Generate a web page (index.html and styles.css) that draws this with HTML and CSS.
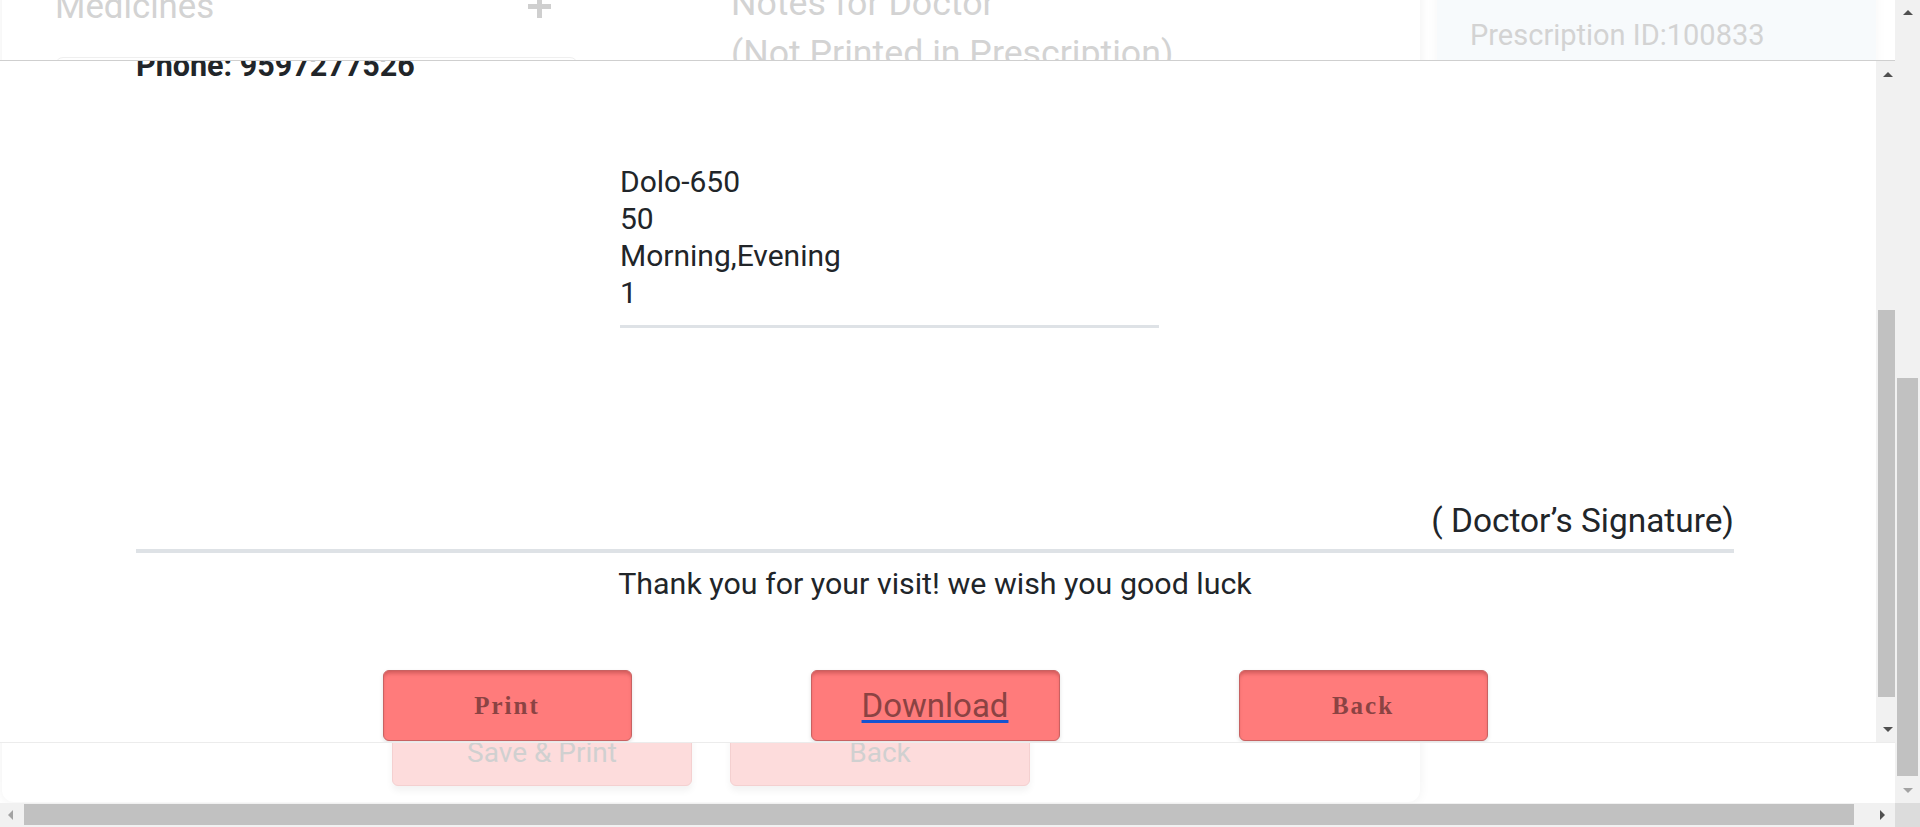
FILE: index.html
```html
<!DOCTYPE html>
<html lang="en">
<head>
<meta charset="utf-8">
<title>Prescription</title>
<link rel="stylesheet" href="styles.css">
</head>
<body>
<div class="viewport">
  <div class="page">
    <div class="page-scroll">
      <section class="card">
        <div class="form-row">
          <div class="col-med">
            <div class="label-row">
              <span class="label">Medicines</span>
              <svg class="plus" width="25" height="25" viewBox="0 0 25 25"><path d="M12.5 1v23M1 12.5h23" stroke="#cfcfcf" stroke-width="5" fill="none"/></svg>
            </div>
            <div class="input-box"></div>
          </div>
          <div class="col-notes">
            <p class="notes">Notes for Doctor<br>(Not Printed in Prescription)</p>
          </div>
        </div>
        <div class="card-actions">
          <button class="ghost-btn">Save &amp; Print</button>
          <button class="ghost-btn">Back</button>
        </div>
      </section>
      <aside class="side">
        <p class="rx-id">Prescription ID:100833</p>
      </aside>
    </div>
  </div>
  <div class="vscroll">
    <div class="sb-arrow"><span class="tri-up"></span></div>
    <div class="vs-gap-top"></div>
    <div class="vs-thumb"></div>
    <div class="vs-gap-bottom"></div>
    <div class="sb-arrow"><span class="tri-down dim"></span></div>
  </div>
  <div class="hscroll">
    <div class="hs-left"><span class="tri-left dim"></span></div>
    <div class="hs-thumb"></div>
    <div class="hs-gap"></div>
    <div class="hs-right"><span class="tri-right"></span></div>
  </div>
  <div class="corner"></div>
</div>

<div class="modal">
  <div class="modal-body">
    <div class="rx">
      <p class="phone">Phone: 9597277526</p>
      <div class="med">
        <p>Dolo-650</p>
        <p>50</p>
        <p>Morning,Evening</p>
        <p>1</p>
      </div>
      <p class="sign">( Doctor’s Signature)</p>
      <hr class="rule">
      <p class="thanks">Thank you for your visit! we wish you good luck</p>
      <div class="actions">
        <button class="btn btn-serif">Print</button>
        <button class="btn"><span class="dl">Download</span></button>
        <button class="btn btn-serif">Back</button>
      </div>
    </div>
  </div>
  <div class="modal-scroll">
    <div class="ms-arrow"><span class="tri-up"></span></div>
    <div class="ms-gap-top"></div>
    <div class="ms-thumb"></div>
    <div class="ms-gap-bottom"></div>
    <div class="ms-arrow"><span class="tri-down"></span></div>
  </div>
</div>
</body>
</html>
```

FILE: styles.css
```css
* { box-sizing: border-box; }

html, body {
  margin: 0;
  padding: 0;
  width: 1920px;
  height: 827px;
  overflow: hidden;
  background: #fff;
  font-family: Roboto, "Liberation Sans", sans-serif;
}

p { margin: 0; }

/* ---------- viewport with page scrollbars ---------- */
.viewport {
  display: grid;
  grid-template-columns: 1895px 25px;
  grid-template-rows: 803px 24px;
  width: 1920px;
  height: 827px;
}

.page {
  overflow: hidden;
  background: #fff;
}

.page-scroll {
  display: flex;
  align-items: flex-start;
  margin-top: -40px;
}

.card {
  width: 1418px;
  height: 842px;
  margin-left: 2px;
  display: flex;
  flex-direction: column;
  justify-content: space-between;
  background: #fff;
  border-radius: 0 0 12px 12px;
  box-shadow: 0 0 12px rgba(0, 0, 0, 0.06);
}

.form-row {
  display: flex;
  align-items: flex-start;
}

.col-med {
  margin-left: 53px;
  width: 523px;
}

.label-row {
  display: flex;
  justify-content: space-between;
  align-items: center;
  padding-top: 22px;
  padding-right: 26px;
}

.label {
  font-size: 34.8px;
  line-height: 48px;
  color: #d3d3d3;
}

.plus { display: block; }

.input-box {
  margin-top: 27px;
  height: 120px;
  border: 1px solid #efefef;
  border-radius: 8px;
}

.col-notes {
  margin-left: 153px;
  padding-top: 17.8px;
}

.notes {
  font-size: 35.7px;
  line-height: 50px;
  color: #d3d3d3;
}

.card-actions {
  display: flex;
  gap: 38px;
  padding-left: 390px;
  padding-bottom: 16px;
}

.ghost-btn {
  width: 300px;
  height: 68px;
  background: #fddcdc;
  border: 1px solid #f4d0d0;
  border-radius: 6px;
  box-shadow: 0 5px 7px rgba(0, 0, 0, 0.05);
  color: #d0d0d0;
  font-family: Roboto, "Liberation Sans", sans-serif;
  font-size: 28px;
  padding: 0;
}

.side {
  margin-left: 17px;
  width: 439px;
  height: 420px;
  padding-top: 55px;
  padding-left: 33px;
  background: #f7fafc;
  box-shadow: 0 0 12px rgba(0, 0, 0, 0.04);
}

.rx-id {
  font-size: 29px;
  line-height: 40px;
  color: #d3d3d3;
}

/* page vertical scrollbar */
.vscroll {
  display: flex;
  flex-direction: column;
  background: #f1f1f1;
}

.sb-arrow {
  height: 25px;
  display: flex;
  align-items: center;
  justify-content: center;
}

.vs-gap-top { height: 353px; }
.vs-thumb { height: 398px; margin: 0 2px; background: #c1c1c1; }
.vs-gap-bottom { flex: 1; }

/* page horizontal scrollbar */
.hscroll {
  display: flex;
  align-items: stretch;
  background: #f1f1f1;
  padding: 1px 0 2px;
}

.hs-left {
  width: 20px;
  display: flex;
  align-items: center;
  justify-content: center;
}

.hs-thumb {
  width: 1830px;
  margin-left: 4px;
  background: #c1c1c1;
}

.hs-gap { flex: 1; }

.hs-right {
  width: 26px;
  display: flex;
  align-items: center;
  justify-content: center;
}

.corner { background: #dcdcdc; }

/* triangles */
.tri-up, .tri-down, .tri-left, .tri-right {
  display: block;
  width: 0;
  height: 0;
}
.tri-up {
  border-left: 5px solid transparent;
  border-right: 5px solid transparent;
  border-bottom: 5px solid #505050;
}
.tri-down {
  border-left: 5px solid transparent;
  border-right: 5px solid transparent;
  border-top: 5px solid #505050;
}
.tri-left {
  border-top: 5px solid transparent;
  border-bottom: 5px solid transparent;
  border-right: 5px solid #505050;
}
.tri-right {
  border-top: 5px solid transparent;
  border-bottom: 5px solid transparent;
  border-left: 5px solid #505050;
}
.tri-down.dim { border-top-color: #a3a3a3; }
.tri-left.dim { border-right-color: #a3a3a3; }

/* ---------- modal overlay ---------- */
.modal {
  position: fixed;
  top: 60px;
  left: 0;
  width: 1895px;
  height: 683px;
  display: flex;
  background: #fff;
  border-top: 1px solid #cfcfcf;
  border-bottom: 1px solid #ececec;
}

.modal-body {
  flex: 1;
  overflow: hidden;
}

.rx {
  margin-top: -14px;
  margin-left: 136px;
  width: 1598px;
  color: #212529;
  font-size: 30px;
  line-height: 37px;
}

.phone {
  font-weight: 700;
  font-size: 30.5px;
}

.med {
  margin-top: 79px;
  margin-left: 484px;
  width: 539px;
  padding-bottom: 13.5px;
  border-bottom: 3px solid #dee2e6;
}

.sign {
  margin-top: 174px;
  text-align: right;
  font-size: 33.4px;
}

.rule {
  margin: 10.6px 0 0;
  height: 0;
  border: 0;
  border-top: 4px solid #dee2e6;
}

.thanks {
  margin-top: 12.25px;
  text-align: center;
  font-size: 30.4px;
}

.actions {
  margin-top: 67.75px;
  display: flex;
  justify-content: center;
  gap: 179px;
}

.btn {
  width: 249px;
  height: 71px;
  padding: 0;
  display: flex;
  align-items: center;
  justify-content: center;
  background: #ff7b7b;
  border: 1px solid #c86262;
  border-radius: 6px;
  box-shadow: inset 0 4px 4px -2px rgba(110, 20, 20, 0.35), 0 2px 4px rgba(0, 0, 0, 0.12);
  color: #8b4343;
  font-family: Roboto, "Liberation Sans", sans-serif;
}

.btn-serif {
  font-family: "Liberation Serif", "Times New Roman", serif;
  font-weight: 700;
  font-size: 25px;
  letter-spacing: 2px;
}

.dl {
  font-size: 33px;
  line-height: 37px;
  text-decoration: underline;
  text-decoration-color: #1553d1;
  text-decoration-thickness: 3px;
  text-underline-offset: 3px;
}

/* modal scrollbar */
.modal-scroll {
  width: 19px;
  display: flex;
  flex-direction: column;
  background: #f1f1f1;
}

.ms-arrow {
  height: 26px;
  display: flex;
  align-items: center;
  justify-content: center;
  padding-left: 5px;
}

.ms-gap-top { height: 223px; }
.ms-thumb { height: 387px; margin-left: 2px; background: #c1c1c1; }
.ms-gap-bottom { flex: 1; }
```
